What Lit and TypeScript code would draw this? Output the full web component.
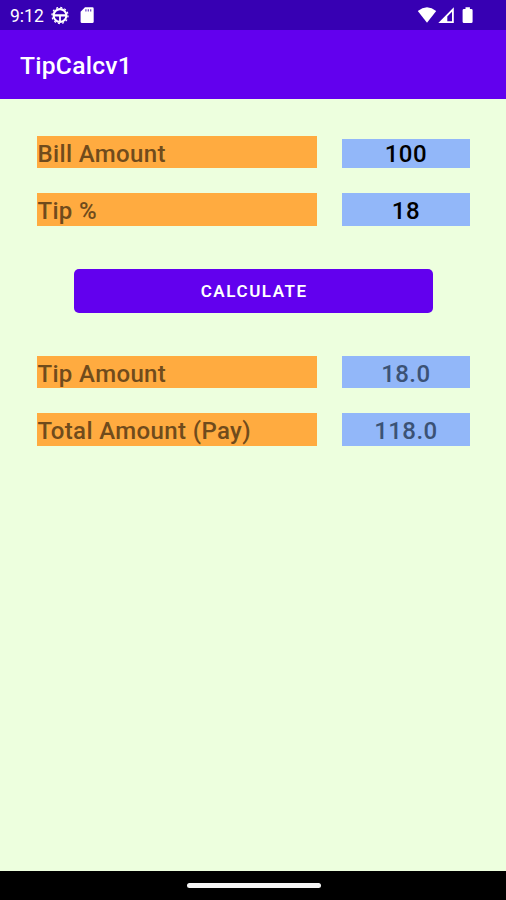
import { LitElement, html, css } from "lit";
import { customElement, property, state } from "lit/decorators.js";

@customElement("status-bar")
class StatusBar extends LitElement {
  static styles = css`
    :host { display: flex; justify-content: space-between; height: 30px; background: #3700b3; color: #fff; }
    .side { display: flex; align-items: flex-start; }
    .time { width: 35px; margin: 6px 6px 0 10px; font: 400 17.5px/20px Roboto, sans-serif; white-space: nowrap; }
    .wheel { margin-top: 6px; }
    .card { margin: 7px 0 0 11px; }
    .wifi { margin-top: 7px; }
    .signal { margin: 7px 0 0 .500px; }
    .battery { margin: 7px 32.500px 0 7px; }
    svg { display: block; fill: currentColor; }
  `;
  render() {
    return html`
      <div class="side">
        <span class="time">9:12</span>
        <svg class="wheel" width="18" height="19" viewBox="0 0 18 19">
          <circle cx="9" cy="9.5" r="6.400" fill="none" stroke="#fff" stroke-width="2.100" />
          <circle cx="9" cy="9.500" r="8" fill="none" stroke="#fff" stroke-width="1.300" stroke-dasharray="2 2.190" />
          <path d="M3 8.300h12v2.200H9.900V15.500H8.100V10.500H3z" />
        </svg>
        <svg class="card" width="14" height="17" viewBox="0 0 14 17">
          <path d="M5 .3h7.300q1.400 0 1.400 1.400v13q0 1.400-1.400 1.400H2q-1.400 0-1.400-1.400V4.800z" />
          <path d="M5.300 2.300h1.200v2.300H5.300zm2.400 0h1.200v2.300H7.700zm2.400 0h1.200v2.300h-1.200z" fill="#3700b3" opacity=".75" />
        </svg>
      </div>
      <div class="side">
        <svg class="wifi" width="20" height="17" viewBox="0 0 20 17">
          <path d="M.8 4Q10-3.300 19.200 4L10 15.800z" />
        </svg>
        <svg class="signal" width="17" height="17" viewBox="0 0 17 17">
          <path fill-rule="evenodd" d="M15.800.3V16H.3zM14 4.800 9.300 9.500v4.700H14z" />
        </svg>
        <svg class="battery" width="12" height="17" viewBox="0 0 12 17">
          <path d="M3.500.3h4.400V2h1.300q1.400 0 1.400 1.200v11.600q0 1.200-1.400 1.200H2Q.6 16 .6 14.800V3.200Q.6 2 2 2h1.500z" />
        </svg>
      </div>
    `;
  }
}

@customElement("amount-row")
class AmountRow extends LitElement {
  @property() label = "";
  @property() value = "";
  @property({ type: Boolean }) editable = false;
  @property({ type: Boolean }) compact = false;

  static styles = css`
    :host { display: grid; grid-template: 32.300px / 280px 128px; column-gap: 24.500px; height: 32.300px; align-items: center; font: 500 24px/28px Roboto, sans-serif; }
    .label { height: 100%; box-sizing: border-box; padding: 4.100px 0 0; background: #ffab40; color: #704b1c; white-space: nowrap; letter-spacing: .370px; }
    .value { width: 100%; height: 100%; box-sizing: border-box; margin: 0; padding: 4.100px 0 0; border: 0; border-radius: 0; background: #92b7f9; color: #3b5275; font: inherit; letter-spacing: .4px; text-align: center; }
    .editable { padding-top: 3.600px; color: #000; }
    .compact { height: 28.300px; align-self: end; margin-bottom: .7px; padding: 1px 0 0; line-height: 27px; }
  `;
  render() {
    return html`
      <div class="label">${this.label}</div>
      ${this.editable
        ? html`<input class="value editable ${this.compact ? "compact" : ""}" aria-label=${this.label} .value=${this.value}
            @input=${(e: Event) => this.dispatchEvent(new CustomEvent("amount", { detail: (e.target as HTMLInputElement).value }))} />`
        : html`<div class="value">${this.value}</div>`}
    `;
  }
}

@customElement("app-root")
class AppRoot extends LitElement {
  @state() bill = "100";
  @state() percent = "18";
  @state() tip = 18;
  @state() total = 118;

  static styles = css`
    :host { display: flex; flex-direction: column; height: 100vh; overflow: hidden; background: #edffde; font-family: Roboto, sans-serif; }
    .title { height: 68.500px; box-sizing: border-box; flex: none; padding: 1.500px 0 0 20px; background: #6200ee; color: #fff; font-size: 24.600px; font-weight: 500; letter-spacing: .250px; line-height: 68px; }
    .content { flex: 1; display: flex; flex-direction: column; padding: 37.500px 36px 0 37.400px; }
    .rows { display: grid; row-gap: 25px; }
    .calculate { width: 359px; height: 44.500px; margin: 43px 0 43px 36.600px; padding: 0 0 0 1.500px; border: 0; border-radius: 5px; background: #6200ee; color: #fff; font: 600 17px/20px Roboto, sans-serif; letter-spacing: 1.550px; text-align: center; }
    .navigation { flex: none; height: 29.500px; display: flex; justify-content: center; align-items: center; background: #000; }
    .handle { width: 134px; height: 5.500px; margin-left: 1px; border-radius: 3px; background: #f5f5f5; }
  `;

  private calculate() {
    this.tip = (Number(this.bill) * Number(this.percent)) / 100;
    this.total = Number(this.bill) + this.tip;
  }

  render() {
    return html`
      <status-bar></status-bar>
      <header class="title">TipCalcv1</header>
      <main class="content">
        <div class="rows">
          <amount-row label="Bill Amount" .value=${this.bill} editable compact @amount=${(e: CustomEvent) => (this.bill = e.detail)}></amount-row>
          <amount-row label="Tip %" .value=${this.percent} editable @amount=${(e: CustomEvent) => (this.percent = e.detail)}></amount-row>
        </div>
        <button class="calculate" @click=${this.calculate}>CALCULATE</button>
        <div class="rows">
          <amount-row label="Tip Amount" .value=${this.tip.toFixed(1)}></amount-row>
          <amount-row label="Total Amount (Pay)" .value=${this.total.toFixed(1)}></amount-row>
        </div>
      </main>
      <footer class="navigation"><div class="handle"></div></footer>
    `;
  }
}
